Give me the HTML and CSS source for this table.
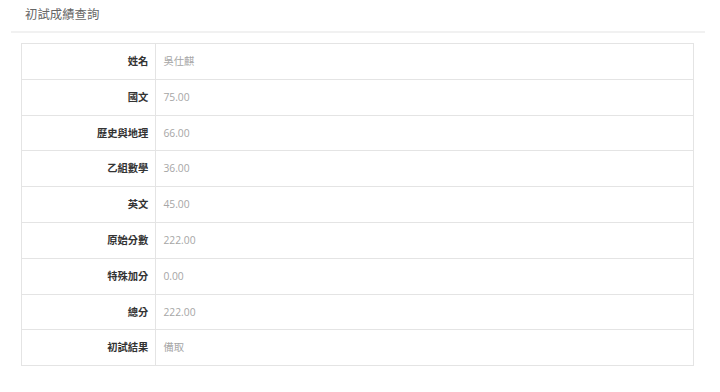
FILE: index.html
```html
<!DOCTYPE html>
<html lang="zh-Hant">
<head>
<meta charset="utf-8">
<title>初試成績查詢</title>
<link rel="stylesheet" href="styles.css">
</head>
<body>
<div class="page">
  <h1 class="title">初試成績查詢</h1>
  <div class="panel">
    <table class="score-table">
      <tr><th>姓名</th><td>吳仕麒</td></tr>
      <tr><th>國文</th><td>75.00</td></tr>
      <tr><th>歷史與地理</th><td>66.00</td></tr>
      <tr><th>乙組數學</th><td>36.00</td></tr>
      <tr><th>英文</th><td>45.00</td></tr>
      <tr><th>原始分數</th><td>222.00</td></tr>
      <tr><th>特殊加分</th><td>0.00</td></tr>
      <tr><th>總分</th><td>222.00</td></tr>
      <tr><th>初試結果</th><td>備取</td></tr>
    </table>
  </div>
</div>
</body>
</html>
```
FILE: styles.css
```css
html, body {
  margin: 0;
  padding: 0;
  background: #ffffff;
}
body {
  font-family: "Open Sans", "Noto Sans CJK TC", sans-serif;
  color: #333;
}
.page {
  padding: 0 15px 0 11px;
}
.title {
  margin: 0;
  padding: 5px 0 0 14px;
  height: 33px;
  box-sizing: border-box;
  font-family: "Noto Sans CJK TC", sans-serif;
  font-weight: 400;
  font-size: 12.4px;
  line-height: 18px;
  color: #666;
  border-bottom: 2px solid #f1f1f1;
}
.panel {
  padding: 10px 11px 0 10px;
}
.score-table {
  width: 100%;
  border-collapse: collapse;
  border: 1px solid #e4e4e4;
}
.score-table th,
.score-table td {
  border: 1px solid #e4e4e4;
  padding: 8px 7px;
  height: 18.8px;
  line-height: 18.8px;
  font-size: 10.3px;
  vertical-align: middle;
}
.score-table th {
  width: 20%;
  text-align: right;
  font-family: "Noto Sans CJK TC", sans-serif;
  font-weight: 700;
  color: #333;
}
.score-table td {
  text-align: left;
  font-family: "Open Sans", "Noto Sans CJK TC", sans-serif;
  font-weight: 400;
  color: #a6a6a6;
}
```
